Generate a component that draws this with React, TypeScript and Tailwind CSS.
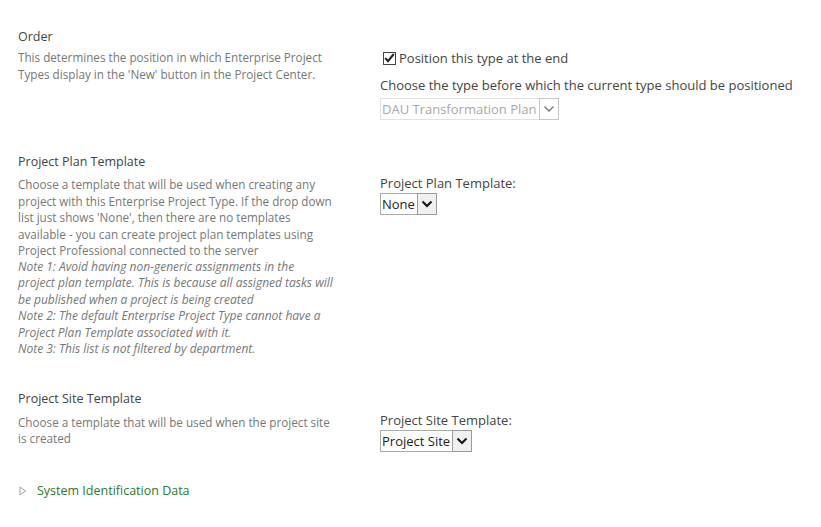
import { ReactNode } from 'react';

const font = { fontFamily: '"Open Sans", "Noto Sans", Arial, sans-serif' };

function Chevron({ disabled }: { disabled?: boolean }) {
  return (
    <svg width="12" height="8" viewBox="0 0 12 8" fill="none">
      <path
        d="M1.5 1.5 L6 6 L10.5 1.5"
        stroke={disabled ? '#777' : '#111'}
        strokeWidth={disabled ? 1.3 : 2}
      />
    </svg>
  );
}

function FakeSelect({ value, disabled }: { value: string; disabled?: boolean }) {
  return (
    <div
      className={`inline-flex h-[22px] items-stretch border ${
        disabled ? 'border-[#e1e1e1] text-[#a8a8a8]' : 'border-[#ababab] text-[#222]'
      }`}
    >
      <span className="pl-[1px] pr-[2px] text-[13px] leading-[20px]">{value}</span>
      <span
        className={`flex w-[20px] items-center justify-center border ${
          disabled ? 'border-[#c6c6c6] bg-white' : 'border-[#9a9a9a] bg-[#f0f0f0]'
        } -my-[1px] -mr-[1px]`}
      >
        <Chevron disabled={disabled} />
      </span>
    </div>
  );
}

function Section({
  title,
  desc,
  children,
  className,
  descClass,
}: {
  title: string;
  desc: ReactNode;
  children: ReactNode;
  className?: string;
  descClass?: string;
}) {
  return (
    <div className={`grid grid-cols-[380px_1fr] ${className ?? ''}`}>
      <div className="pl-[18px]">
        <h3 className="text-[12.5px] leading-[18px] text-[#444]">{title}</h3>
        <div className={`w-[316px] text-[11.7px] leading-[16.5px] text-[#777] ${descClass ?? 'mt-[3px]'}`}>
          {desc}
        </div>
      </div>
      <div className="text-[13px] text-[#444]">{children}</div>
    </div>
  );
}

export default function App() {
  return (
    <div className="min-h-[527px] w-[821px] bg-white" style={font}>
      <Section
        className="pt-[28px]"
        title="Order"
        desc={
          <p>
            This determines the position in which Enterprise Project Types display in the 'New' button in the
            Project Center.
          </p>
        }
      >
        <div className="pt-[21px]">
          <label className="flex items-center gap-[3px] leading-[18px]">
            <span className="ml-[3px] flex h-[13px] w-[13px] items-center justify-center border border-[#444] bg-white">
              <svg width="11" height="10" viewBox="0 0 11 10">
                <path d="M1.2 5 L4 8.2 L9.8 1" fill="none" stroke="#222" strokeWidth="2" />
              </svg>
            </span>
            Position this type at the end
          </label>
          <div className="mt-[9px] leading-[18px]">Choose the type before which the current type should be positioned</div>
          <div className="mt-[4px]">
            <FakeSelect value="DAU Transformation Plan" disabled />
          </div>
        </div>
      </Section>

      <Section
        className="pt-[33px]"
        descClass="mt-[5px]"
        title="Project Plan Template"
        desc={
          <>
            <p>
              Choose a template that will be used when creating any project with this Enterprise Project Type. If
              the drop down list just shows 'None', then there are no templates available - you can create project
              plan templates using Project Professional connected to the server
            </p>
            <p className="text-[12px] italic">
              Note 1: Avoid having non-generic assignments in the project plan template. This is because all
              assigned tasks will be published when a project is being created
            </p>
            <p className="text-[12px] italic">
              Note 2: The default Enterprise Project Type cannot have a Project Plan Template associated with it.
            </p>
            <p className="text-[12px] italic">Note 3: This list is not filtered by department.</p>
          </>
        }
      >
        <div className="pt-[21px]">
          <div className="leading-[18px]">Project Plan Template:</div>
          <div className="mt-[1px]">
            <FakeSelect value="None" />
          </div>
        </div>
      </Section>

      <Section
        className="pt-[32px]"
        descClass="mt-[6px]"
        title="Project Site Template"
        desc={<p>Choose a template that will be used when the project site is created</p>}
      >
        <div className="pt-[21px]">
          <div className="leading-[18px]">Project Site Template:</div>
          <div className="mt-[1px]">
            <FakeSelect value="Project Site" />
          </div>
        </div>
      </Section>

      <div className="mt-[30px] flex items-center pl-[19px] text-[12.5px] text-[#2c7a2c]">
        <svg width="8" height="10" viewBox="0 0 8 10" className="mr-[10px]">
          <path d="M1 1 L6.5 5 L1 9 Z" fill="none" stroke="#a0a0a0" strokeWidth="1" />
        </svg>
        System Identification Data
      </div>
    </div>
  );
}
